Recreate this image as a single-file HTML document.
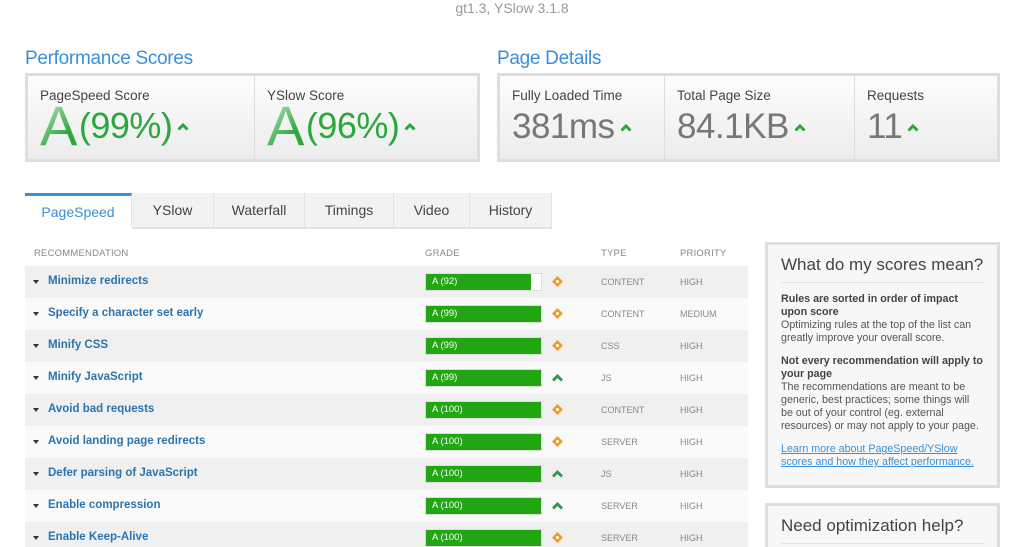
<!DOCTYPE html>
<html><head><meta charset="utf-8"><style>
*{margin:0;padding:0;box-sizing:border-box}
html,body{width:1024px;height:547px;overflow:hidden}
body{background:#fff;font-family:"Liberation Sans",Arial,sans-serif;position:relative}
.abs{position:absolute}
.ver{top:0;left:0;width:1024px;text-align:center;font-size:14px;color:#999;line-height:16px}
h2{position:absolute;font-weight:normal;color:#3a8fd8;font-size:19px;letter-spacing:-0.3px}
.box{position:absolute;border:3px solid #dedede;background:linear-gradient(#fdfdfd,#ececec);display:flex}
.cell{border-right:1px solid #ddd;padding:12px 0 0 12px;position:relative}
.cell:last-child{border-right:none}
.lab{font-size:13.5px;color:#444}
.big{font-size:35px;color:#777;line-height:40px;letter-spacing:-0.5px;display:flex;align-items:center}
.grd{font-size:56px;font-weight:normal;line-height:46px;background:linear-gradient(135deg,#c4e6c8,#2aa83c 70%);-webkit-background-clip:text;color:transparent}
.pct{font-size:36px;color:#2aa83c;letter-spacing:-0.5px;margin-left:2px}
.car{margin-left:5px}
.tabs{position:absolute;top:193px;left:25px;height:34px;display:flex}
.tab{background:#f2f2f2;border-right:1px solid #e2e2e2;font-size:14px;color:#444;display:flex;align-items:center;justify-content:center}
.tab.on{background:#fff;color:#3a8fd8;border-top:3px solid #3a8fd8}
.tline{position:absolute;top:226px;left:132px;width:420px;height:3px;background:#e2e2e2}
.th{position:absolute;top:248px;font-size:9.5px;color:#888;letter-spacing:0.2px}
.row{position:absolute;left:25px;width:723px;height:32px}
.row .n{position:absolute;left:23px;top:9px;font-size:11.5px;font-weight:bold;color:#2a74b0}
.row .tri{position:absolute;left:8px;top:14px;width:0;height:0;border-left:3px solid transparent;border-right:3px solid transparent;border-top:4px solid #333}
.row .bar{position:absolute;left:400px;top:7px;width:117px;height:18px;background:#fff;border:1px solid #ddd}
.row .bar i{display:block;height:16px;background:#22a614;color:#fff;font-style:normal;font-size:9.5px;line-height:16px;padding-left:6px}
.row .ic{position:absolute;left:526px;top:9px}
.row .t{position:absolute;left:576px;top:11px;font-size:9px;color:#888}
.row .p{position:absolute;left:655px;top:11px;font-size:9px;color:#888}
.side{position:absolute;left:765px;width:235px;border:3px solid #dedede;background:#f7f7f7;padding:10px 13px;overflow:hidden}
.side h3{font-weight:normal;font-size:17px;color:#444;padding-bottom:7px;border-bottom:1px solid #e5e5e5;margin-bottom:10px;white-space:nowrap}
.side p{font-size:10.7px;color:#555;line-height:13px;margin-bottom:10px}
.side b{color:#444}
.side a{color:#3a8fd8;text-decoration:underline}
</style></head><body>
<div class="abs ver">gt1.3, YSlow 3.1.8</div>
<h2 style="left:25px;top:48px">Performance Scores</h2>
<h2 style="left:497px;top:48px">Page Details</h2>
<div class="box" style="left:25px;top:73px;width:455px;height:89px">
 <div class="cell" style="width:227px"><div class="lab">PageSpeed Score</div><div class="big"><span class="grd">A</span><span class="pct">(99%)</span><svg class="car" width="12" height="9" viewBox="0 0 12 9"><path d="M1.5 7.5L6 3l4.5 4.5" fill="none" stroke="#2aa83c" stroke-width="3"/></svg></div></div>
 <div class="cell" style="flex:1"><div class="lab">YSlow Score</div><div class="big"><span class="grd">A</span><span class="pct">(96%)</span><svg class="car" width="12" height="9" viewBox="0 0 12 9"><path d="M1.5 7.5L6 3l4.5 4.5" fill="none" stroke="#2aa83c" stroke-width="3"/></svg></div></div>
</div>
<div class="box" style="left:497px;top:73px;width:503px;height:89px">
 <div class="cell" style="width:165px"><div class="lab">Fully Loaded Time</div><div class="big" style="margin-top:4px">381ms<svg class="car" width="12" height="9" viewBox="0 0 12 9"><path d="M1.5 7.5L6 3l4.5 4.5" fill="none" stroke="#2aa83c" stroke-width="3"/></svg></div></div>
 <div class="cell" style="width:190px"><div class="lab">Total Page Size</div><div class="big" style="margin-top:4px">84.1KB<svg class="car" width="12" height="9" viewBox="0 0 12 9"><path d="M1.5 7.5L6 3l4.5 4.5" fill="none" stroke="#2aa83c" stroke-width="3"/></svg></div></div>
 <div class="cell" style="flex:1"><div class="lab">Requests</div><div class="big" style="margin-top:4px">11<svg class="car" width="12" height="9" viewBox="0 0 12 9"><path d="M1.5 7.5L6 3l4.5 4.5" fill="none" stroke="#2aa83c" stroke-width="3"/></svg></div></div>
</div>
<div class="tline"></div>
<div class="tabs">
 <div class="tab on" style="width:107px">PageSpeed</div>
 <div class="tab" style="width:82px">YSlow</div>
 <div class="tab" style="width:91px">Waterfall</div>
 <div class="tab" style="width:89px">Timings</div>
 <div class="tab" style="width:76px">Video</div>
 <div class="tab" style="width:82px">History</div>
</div>
<div class="th" style="left:34px">RECOMMENDATION</div>
<div class="th" style="left:425px">GRADE</div>
<div class="th" style="left:601px">TYPE</div>
<div class="th" style="left:680px">PRIORITY</div>

<div class="row" style="top:266px;background:#f0f0f0"><span class="tri"></span><span class="n">Minimize redirects</span><div class="bar"><i style="width:105px">A (92)</i></div><svg class="ic" width="13" height="13" viewBox="0 0 13 13"><path d="M6.5 1L12 6.5 6.5 12 1 6.5z" fill="#f39c1f"/><circle cx="6.5" cy="6.5" r="1.5" fill="#fff"/></svg><span class="t">CONTENT</span><span class="p">HIGH</span></div>
<div class="row" style="top:298px;background:#fafafa"><span class="tri"></span><span class="n">Specify a character set early</span><div class="bar"><i>A (99)</i></div><svg class="ic" width="13" height="13" viewBox="0 0 13 13"><path d="M6.5 1L12 6.5 6.5 12 1 6.5z" fill="#f39c1f"/><circle cx="6.5" cy="6.5" r="1.5" fill="#fff"/></svg><span class="t">CONTENT</span><span class="p">MEDIUM</span></div>
<div class="row" style="top:330px;background:#f0f0f0"><span class="tri"></span><span class="n">Minify CSS</span><div class="bar"><i>A (99)</i></div><svg class="ic" width="13" height="13" viewBox="0 0 13 13"><path d="M6.5 1L12 6.5 6.5 12 1 6.5z" fill="#f39c1f"/><circle cx="6.5" cy="6.5" r="1.5" fill="#fff"/></svg><span class="t">CSS</span><span class="p">HIGH</span></div>
<div class="row" style="top:362px;background:#fafafa"><span class="tri"></span><span class="n">Minify JavaScript</span><div class="bar"><i>A (99)</i></div><svg class="ic" width="13" height="13" viewBox="0 0 13 13"><path d="M2 9.5L6.5 5 11 9.5" fill="none" stroke="#2a9a4a" stroke-width="2.8"/></svg><span class="t">JS</span><span class="p">HIGH</span></div>
<div class="row" style="top:394px;background:#f0f0f0"><span class="tri"></span><span class="n">Avoid bad requests</span><div class="bar"><i>A (100)</i></div><svg class="ic" width="13" height="13" viewBox="0 0 13 13"><path d="M6.5 1L12 6.5 6.5 12 1 6.5z" fill="#f39c1f"/><circle cx="6.5" cy="6.5" r="1.5" fill="#fff"/></svg><span class="t">CONTENT</span><span class="p">HIGH</span></div>
<div class="row" style="top:426px;background:#fafafa"><span class="tri"></span><span class="n">Avoid landing page redirects</span><div class="bar"><i>A (100)</i></div><svg class="ic" width="13" height="13" viewBox="0 0 13 13"><path d="M6.5 1L12 6.5 6.5 12 1 6.5z" fill="#f39c1f"/><circle cx="6.5" cy="6.5" r="1.5" fill="#fff"/></svg><span class="t">SERVER</span><span class="p">HIGH</span></div>
<div class="row" style="top:458px;background:#f0f0f0"><span class="tri"></span><span class="n">Defer parsing of JavaScript</span><div class="bar"><i>A (100)</i></div><svg class="ic" width="13" height="13" viewBox="0 0 13 13"><path d="M2 9.5L6.5 5 11 9.5" fill="none" stroke="#2a9a4a" stroke-width="2.8"/></svg><span class="t">JS</span><span class="p">HIGH</span></div>
<div class="row" style="top:490px;background:#fafafa"><span class="tri"></span><span class="n">Enable compression</span><div class="bar"><i>A (100)</i></div><svg class="ic" width="13" height="13" viewBox="0 0 13 13"><path d="M2 9.5L6.5 5 11 9.5" fill="none" stroke="#2a9a4a" stroke-width="2.8"/></svg><span class="t">SERVER</span><span class="p">HIGH</span></div>
<div class="row" style="top:522px;background:#f0f0f0;height:25px;overflow:hidden"><span class="tri"></span><span class="n">Enable Keep-Alive</span><div class="bar"><i>A (100)</i></div><svg class="ic" width="13" height="13" viewBox="0 0 13 13"><path d="M6.5 1L12 6.5 6.5 12 1 6.5z" fill="#f39c1f"/><circle cx="6.5" cy="6.5" r="1.5" fill="#fff"/></svg><span class="t">SERVER</span><span class="p">HIGH</span></div>

<div class="side" style="top:242px;height:246px">
 <h3>What do my scores mean?</h3>
 <p><b>Rules are sorted in order of impact upon score</b><br>Optimizing rules at the top of the list can greatly improve your overall score.</p>
 <p><b>Not every recommendation will apply to your page</b><br>The recommendations are meant to be generic, best practices; some things will be out of your control (eg. external resources) or may not apply to your page.</p>
 <p><a>Learn more about PageSpeed/YSlow scores and how they affect performance.</a></p>
</div>
<div class="side" style="top:503px;height:44px;border-bottom:none">
 <h3>Need optimization help?</h3>
</div>
</body></html>
